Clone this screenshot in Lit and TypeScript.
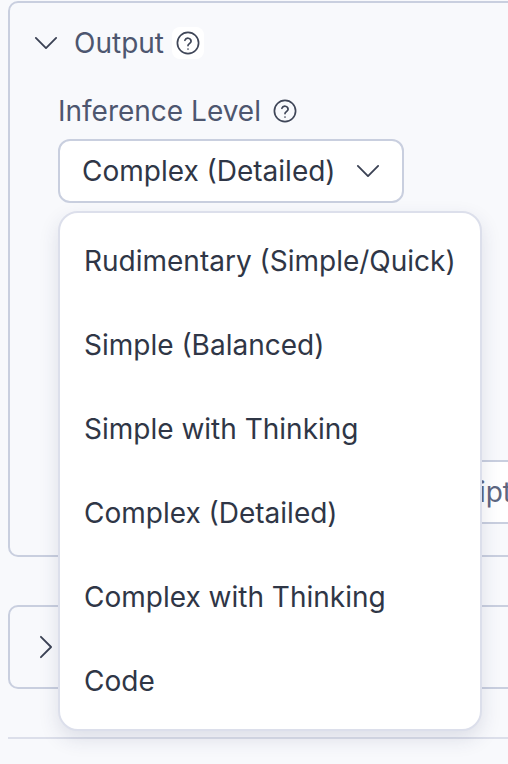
import { LitElement, html, css, svg } from "lit";
import { customElement } from "lit/decorators.js";

const help = html`<svg class="help" viewBox="0 0 24 24" fill="none" stroke="currentColor" stroke-width="1.7" stroke-linecap="round" stroke-linejoin="round"><circle cx="12" cy="12" r="10.6"></circle><path d="M8.9 9.3a3.2 3.2 0 0 1 6.2 1c0 2.1-3.1 2.6-3.1 4.3"></path><path d="M12 18h.01"></path></svg>`;
const chevronDown = svg`<path d="M2 2l11 11L24 2"></path>`;

@customElement("app-root")
export class AppRoot extends LitElement {
  static styles = css`
    :host { display: block; position: relative; width: 508px; height: 764px; overflow: hidden; background: #f8f9fc; font-family: Inter, "Liberation Sans", sans-serif; color: #2f3646; }
    .page { display: flex; flex-direction: column; padding: 1px 0 0 8px; width: 560px; box-sizing: border-box; }
    .panel { box-sizing: border-box; border: 2px solid #c9cfdf; border-radius: 10px; }
    .output { height: 556px; padding: 0 0 0 48px; display: flex; flex-direction: column; align-items: flex-start; }
    .header { display: flex; align-items: center; height: 80px; margin-left: -24px; color: #4d566f; font-size: 28px; line-height: 34px; }
    .chev { fill: none; stroke: #3b4254; stroke-width: 2; stroke-linecap: round; stroke-linejoin: round; flex: none; }
    .header .chev { width: 24px; height: 14px; margin-right: 16px; }
    .help { width: 24px; height: 24px; color: #3f4658; background: #fff; border-radius: 8px; padding: 4px; flex: none; }
    .header .help { margin-left: 8px; }
    .label { display: flex; align-items: center; color: #4d566f; font-size: 28px; line-height: 32px; gap: 12px; margin-top: 12px; }
    .label .help { background: transparent; padding: 0; }
    .select { display: flex; align-items: center; box-sizing: border-box; width: 346px; height: 64px; margin-top: 12px; padding: 0 22px 0 22px; background: #fff; border: 2px solid #c9cfdf; border-radius: 12px; font-size: 28px; justify-content: space-between; }
    .select .chev { width: 24px; height: 14px; }
    .input { box-sizing: border-box; width: 500px; height: 64px; margin-top: 257px; margin-left: 4px; padding-left: 370px; background: #fff; border: 2px solid #c9cfdf; border-radius: 12px 0 0 12px; font-size: 28px; line-height: 60px; color: #5d6680; white-space: nowrap; }
    .collapsed { height: 84px; margin-top: 48px; display: flex; align-items: center; padding-left: 29px; }
    .collapsed .chev { width: 14px; height: 24px; }
    .rule { height: 2px; background: #dcdfea; margin-top: 48px; }
    .menu { position: absolute; left: 58px; top: 211px; width: 424px; height: 520px; box-sizing: border-box; background: #fff; border: 2px solid #dcdfeb; border-radius: 20px; box-shadow: 0 8px 20px rgba(40, 50, 90, 0.13); padding: 6px 0; font-size: 28px; }
    .item { height: 84px; line-height: 84px; padding-left: 24px; white-space: nowrap; }
  `;

  render() {
    const items = ["Rudimentary (Simple/Quick)", "Simple (Balanced)", "Simple with Thinking", "Complex (Detailed)", "Complex with Thinking", "Code"];
    return html`
      <div class="page">
        <section class="panel output">
          <div class="header">
            <svg class="chev" viewBox="0 0 26 15">${chevronDown}</svg>
            <span>Output</span>${help}
          </div>
          <div class="label"><span>Inference Level</span>${help}</div>
          <div class="select"><span>Complex (Detailed)</span><svg class="chev" viewBox="0 0 26 15">${chevronDown}</svg></div>
          <div class="input">Script</div>
        </section>
        <section class="panel collapsed">
          <svg class="chev" viewBox="0 0 15 26"><path d="M2 2l11 11L2 24"></path></svg>
        </section>
        <div class="rule"></div>
      </div>
      <div class="menu">${items.map((t) => html`<div class="item">${t}</div>`)}</div>
    `;
  }
}
